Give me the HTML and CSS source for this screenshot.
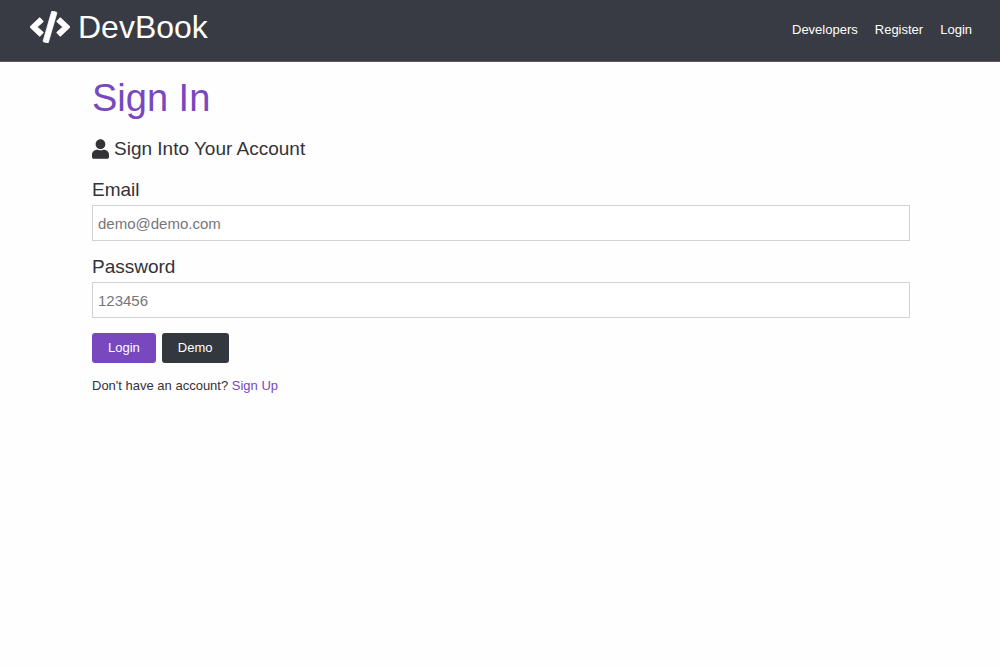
FILE: index.html
```html
<!DOCTYPE html>
<html lang="en">
<head>
<meta charset="utf-8">
<meta name="viewport" content="width=device-width, initial-scale=1">
<title>DevBook</title>
<link rel="stylesheet" href="styles.css">
</head>
<body>
<header class="navbar">
  <a class="brand" href="#">
    <svg class="brand-icon" viewBox="0 0 640 512" aria-hidden="true"><path fill="currentColor" stroke="currentColor" stroke-width="12" d="M278.9 511.5l-61-17.7c-6.4-1.8-10-8.5-8.2-14.9L346.2 8.7c1.8-6.4 8.5-10 14.9-8.2l61 17.7c6.4 1.8 10 8.5 8.2 14.9L293.8 503.3c-1.9 6.4-8.5 10.1-14.9 8.2zm-114-112.2l43.5-46.4c4.6-4.9 4.3-12.7-.8-17.2L117 256l90.6-79.7c5.1-4.5 5.5-12.3.8-17.2l-43.5-46.4c-4.5-4.8-12.1-5.1-17-.5L3.8 247.2c-5.1 4.7-5.1 12.8 0 17.5l144.1 135.1c4.9 4.6 12.5 4.4 17-.5zm327.2.6l144.1-135.1c5.1-4.7 5.1-12.8 0-17.5L492.1 112.1c-4.8-4.5-12.4-4.3-17 .5L431.6 159c-4.6 4.9-4.3 12.7.8 17.2L523 256l-90.6 79.7c-5.1 4.5-5.5 12.3-.8 17.2l43.5 46.4c4.5 4.9 12.1 5.1 17 .6z"/></svg>
    <span>DevBook</span>
  </a>
  <nav class="nav-links">
    <a href="#">Developers</a>
    <a href="#">Register</a>
    <a href="#">Login</a>
  </nav>
</header>
<main class="container">
  <h1 class="title">Sign In</h1>
  <p class="lead">
    <svg class="lead-icon" viewBox="0 0 448 512" aria-hidden="true"><path fill="currentColor" d="M224 256c70.7 0 128-57.3 128-128S294.7 0 224 0 96 57.3 96 128s57.3 128 128 128zm89.6 20h-16.7c-22.2 10.2-46.9 16-72.9 16s-50.6-5.8-72.9-16h-16.7C60.2 276 0 336.2 0 410.4V464c0 26.5 21.5 48 48 48h352c26.5 0 48-21.5 48-48v-53.6c0-74.2-60.2-134.4-134.4-134.4z"/></svg>
    <span>Sign Into Your Account</span>
  </p>
  <form class="form">
    <div class="field">
      <label for="email">Email</label>
      <input id="email" type="email" placeholder="demo@demo.com">
    </div>
    <div class="field">
      <label for="password">Password</label>
      <input id="password" type="password" placeholder="123456">
    </div>
    <div class="actions">
      <button class="btn btn-primary" type="submit">Login</button>
      <button class="btn btn-dark" type="button">Demo</button>
    </div>
  </form>
  <p class="note">Don't have an account? <a href="#">Sign Up</a></p>
</main>
</body>
</html>
```
FILE: styles.css
```css
* {
  box-sizing: border-box;
  margin: 0;
  padding: 0;
}

body {
  background: #fefefe;
  color: #333338;
  font-family: "Liberation Sans", Arial, sans-serif;
  font-size: 13px;
}

a {
  color: #7848be;
  text-decoration: none;
}

.navbar {
  display: flex;
  align-items: center;
  justify-content: space-between;
  padding: 8px 28px 15px 30px;
  background: #383b43;
  border-bottom: 1px solid #6a45ae;
}

.navbar a {
  color: #fff;
}

.brand {
  display: flex;
  align-items: center;
  gap: 8px;
  font-size: 32px;
  line-height: 38px;
}

.brand-icon {
  width: 40px;
  height: 32px;
}

.nav-links {
  display: flex;
  gap: 17px;
  padding-top: 6px;
  line-height: 20px;
}

.container {
  width: 82%;
  max-width: 1100px;
  margin: 0 auto;
  padding: 13px 0 32px 2px;
}

.title {
  color: #7848be;
  font-size: 38px;
  font-weight: 400;
  line-height: 46px;
}

.lead {
  display: flex;
  align-items: center;
  gap: 5px;
  margin: 16px 0 18px;
  font-size: 19px;
  line-height: 24px;
}

.lead-icon {
  width: 17px;
  height: 20px;
}

.form,
.field {
  display: flex;
  flex-direction: column;
}

.form {
  gap: 15px;
}

.field {
  gap: 4px;
}

.field label {
  font-size: 19px;
  line-height: 22px;
}

.field input {
  width: 100%;
  height: 36px;
  padding: 0 5px;
  border: 1px solid #d2d2d6;
  background: #fff;
  color: #333338;
  font: inherit;
  font-size: 15px;
}

.field input::placeholder {
  color: #76767a;
}

.actions {
  display: flex;
  gap: 6px;
}

.btn {
  padding: 0 16px;
  border: 0;
  border-radius: 3px;
  color: #fff;
  font: inherit;
  line-height: 30px;
  cursor: pointer;
}

.btn-primary {
  background: #7848be;
}

.btn-dark {
  background: #33383f;
}

.note {
  margin-top: 13px;
  line-height: 20px;
}
```
